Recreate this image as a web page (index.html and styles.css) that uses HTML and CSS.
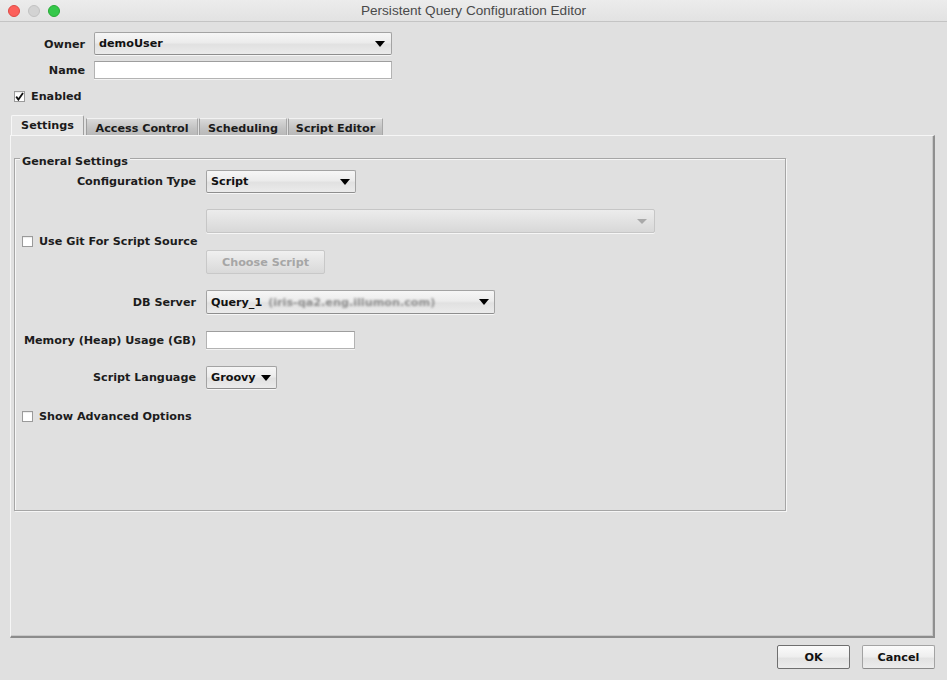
FILE: index.html
```html
<!DOCTYPE html>
<html>
<head>
<meta charset="utf-8">
<link rel="stylesheet" href="styles.css">
</head>
<body>
<div class="window">
  <div class="titlebar">
    <div class="lights">
      <span class="light red"></span>
      <span class="light gray"></span>
      <span class="light green"></span>
    </div>
    <div class="title">Persistent Query Configuration Editor</div>
  </div>

  <div class="top">
    <div class="trow">
      <span class="tlbl">Owner</span>
      <div class="combo owner"><span class="ctext">demoUser</span><span class="arrow"></span></div>
    </div>
    <div class="trow name-row">
      <span class="tlbl">Name</span>
      <div class="field name"></div>
    </div>
    <div class="check-row enabled-row">
      <span class="cb checked"><svg width="9" height="9" viewBox="0 0 9 9"><path d="M1.2 4.6 L3.4 7.6 L8 1" fill="none" stroke="#111" stroke-width="1.8"/></svg></span>
      <span>Enabled</span>
    </div>
  </div>

  <div class="tabs">
    <div class="tab sel t1">Settings</div>
    <div class="tab t2">Access Control</div>
    <div class="tab t3">Scheduling</div>
    <div class="tab t4">Script Editor</div>
  </div>

  <div class="panel">
    <div class="group">
      <span class="gtitle">General Settings</span>
      <div class="grow r1">
        <span class="lbl">Configuration Type</span>
        <div class="combo cfg"><span class="ctext">Script</span><span class="arrow"></span></div>
      </div>
      <div class="grow r2">
        <div class="lbl chk">
          <span class="cb"></span><span>Use Git For Script Source</span>
        </div>
        <div class="stack">
          <div class="combo disabled git"><span class="arrow small"></span></div>
          <div class="btn disabled choose">Choose Script</div>
        </div>
      </div>
      <div class="grow r3">
        <span class="lbl">DB Server</span>
        <div class="combo db"><span class="ctext">Query_1 <span class="blur">(iris-qa2.eng.illumon.com)</span></span><span class="arrow"></span></div>
      </div>
      <div class="grow r4">
        <span class="lbl">Memory (Heap) Usage (GB)</span>
        <div class="field mem"></div>
      </div>
      <div class="grow r5">
        <span class="lbl">Script Language</span>
        <div class="combo lang"><span class="ctext">Groovy</span><span class="arrow"></span></div>
      </div>
      <div class="grow r6">
        <div class="lbl chk">
          <span class="cb"></span><span>Show Advanced Options</span>
        </div>
      </div>
    </div>
  </div>

  <div class="buttons">
    <div class="btn ok">OK</div>
    <div class="btn cancel">Cancel</div>
  </div>
</div>
</body>
</html>
```

FILE: styles.css
```css
* { box-sizing: border-box; }
html, body { margin: 0; padding: 0; }
body {
  background: #e0e0e0;
  font-family: "DejaVu Sans", "Liberation Sans", sans-serif;
  font-size: 11.2px;
  font-weight: bold;
  color: #1c1c1c;
}
.window { width: 947px; height: 680px; overflow: hidden; background: #e0e0e0; }

.titlebar {
  height: 22px;
  background: linear-gradient(#ececec, #e2e2e2);
  border-bottom: 1px solid #c4c4c4;
  display: flex;
  align-items: center;
}
.lights { display: flex; gap: 8px; padding-left: 8px; width: 60px; flex: none; }
.light { width: 12px; height: 12px; border-radius: 50%; display: block; }
.light.red { background: #fc605b; border: 1px solid #de4a45; }
.light.gray { background: #d3d3d3; border: 1px solid #c2c2c2; }
.light.green { background: #34c84a; border: 1px solid #27aa35; }
.title {
  flex: 1;
  margin-left: -60px;
  text-align: center;
  font-family: "Liberation Sans", "Helvetica", sans-serif;
  font-weight: normal;
  font-size: 13.6px;
  color: #4a4a4a;
}

.top { padding-top: 10px; }
.trow { display: flex; align-items: center; gap: 9px; }
.tlbl { width: 85px; text-align: right; padding-top: 1px; }
.name-row { margin-top: 6px; }
.check-row { display: flex; align-items: center; gap: 6px; white-space: nowrap; }
.enabled-row { margin-top: 10px; padding-left: 14px; height: 15px; }

.cb {
  width: 11px; height: 11px;
  background: #fff;
  border: 1px solid #9a9a9a;
  box-shadow: inset 0 1px 1px rgba(0,0,0,0.08);
  display: flex; align-items: center; justify-content: center;
  flex: none;
}
.cb svg { display: block; }

.combo {
  height: 23px;
  border: 1px solid #a3a3a3;
  border-bottom-color: #8e8e8e;
  border-radius: 2px;
  background: linear-gradient(#f6f6f6, #ececec 45%, #e1e1e1 55%, #ebebeb);
  box-shadow: 0 1px 0 rgba(255,255,255,0.7);
  display: flex;
  align-items: center;
  justify-content: space-between;
  padding: 0 5px 0 4px;
  color: #111;
  white-space: nowrap;
}
.arrow {
  width: 0; height: 0;
  border-left: 5.5px solid transparent;
  border-right: 5.5px solid transparent;
  border-top: 6px solid #000;
}
.arrow.small {
  border-left-width: 5px; border-right-width: 5px; border-top: 5px solid #a9a9a9;
  margin-left: auto; margin-right: 2px;
}
.owner { width: 298px; }
.combo.owner .arrow { margin-right: 1px; }

.field {
  background: #fff;
  border: 1px solid #b3b3b3;
  border-top-color: #9e9e9e;
  box-shadow: 0 1px 0 rgba(255,255,255,0.6);
}
.name { width: 298px; height: 18px; }

.tabs { display: flex; align-items: flex-end; margin-top: 11px; padding-left: 11px; height: 20px; }
.tab {
  height: 17px;
  display: flex; align-items: center; justify-content: center;
  background: linear-gradient(#d9d9d9, #c2c2c2 60%, #b9b9b9);
  border-top: 1px solid #f2f2f2;
  border-left: 1px solid #9f9f9f;
  border-right: 1px solid #a8a8a8;
  color: #1a1a1a;
  padding-top: 2px;
  white-space: nowrap;
}
.tab.sel {
  height: 20px;
  background: #e5e5e5;
  border-top: 1px solid #f7f7f7;
  border-left: 1px solid #f7f7f7;
  border-right: 1px solid #a0a0a0;
  border-radius: 2px 2px 0 0;
  padding-top: 1px;
  padding-bottom: 1px;
}
.t1 { width: 73px; margin-right: 2px; }
.t2 { width: 112px; margin-right: 1px; }
.t3 { width: 88px; margin-right: 1px; }
.t4 { width: 95px; }

.panel {
  margin-left: 10px;
  width: 925px;
  height: 503px;
  border-top: 1px solid #f6f6f6;
  border-left: 1px solid #f6f6f6;
  border-right: 2px solid #8f8f8f;
  border-bottom: 2px solid #8c8c8c;
  box-shadow: inset -1px -1px 0 #c9c9c9;
  padding: 22px 0 0 3px;
}

.group {
  width: 772px;
  height: 353px;
  border: 1px solid #a6a6a6;
  box-shadow: inset 1px 1px 0 #f6f6f6, 1px 1px 0 #f6f6f6;
  display: flex;
  flex-direction: column;
  align-items: flex-start;
}
.gtitle {
  margin: -4px 0 0 5px;
  padding: 0 2px;
  height: 14px;
  line-height: 14px;
  background: #e0e0e0;
}
.grow { display: flex; align-items: center; gap: 10px; }
.lbl { width: 181px; text-align: right; flex: none; white-space: nowrap; }
.lbl.chk { display: flex; align-items: center; gap: 6px; text-align: left; padding-left: 7px; }

.r1 { margin-top: 1px; }
.r2 { margin-top: 16px; }
.r3 { margin-top: 16px; }
.r4 { margin-top: 17px; }
.r5 { margin-top: 17px; }
.r6 { margin-top: 20px; height: 15px; }

.cfg { width: 150px; }
.stack { display: flex; flex-direction: column; align-items: flex-start; gap: 17px; }
.combo.disabled {
  border-color: #c6c6c6;
  background: linear-gradient(#ececec, #e2e2e2 50%, #d8d8d8);
}
.git { width: 449px; height: 24px; }
.db { width: 289px; height: 24px; }
.mem { width: 149px; height: 18px; }
.lang { width: 71px; }
.blur { color: #8f8f8f; filter: blur(1.3px); margin-left: 2px; }

.btn {
  display: flex; align-items: center; justify-content: center;
  height: 24px;
  border: 1px solid #a3a3a3;
  border-bottom-color: #8a8a8a;
  border-radius: 2px;
  background: linear-gradient(#fbfbfb, #eeeeee 50%, #e2e2e2 55%, #ececec);
  color: #111;
}
.btn.disabled {
  border-color: #c8c8c8;
  background: linear-gradient(#f0f0f0, #e4e4e4 50%, #d9d9d9);
  color: #a6a6a6;
}
.choose { width: 119px; }

.buttons { display: flex; justify-content: flex-end; gap: 12px; margin-top: 7px; width: 935px; }
.ok, .cancel { width: 73px; }
.ok { border-color: #6f6f6f; }
```
